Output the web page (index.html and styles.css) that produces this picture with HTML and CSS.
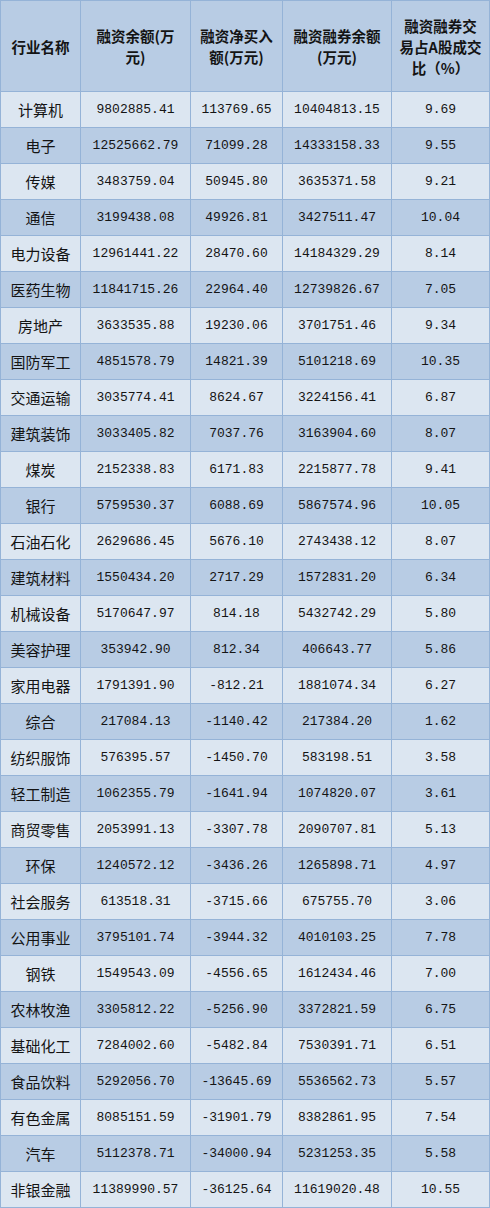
FILE: index.html
```html
<!DOCTYPE html>
<html lang="zh-CN">
<head>
<meta charset="utf-8">
<title>行业融资融券</title>
<link rel="stylesheet" href="styles.css">
</head>
<body>
<div class="table">
  <div class="cell head">行业名称</div>
  <div class="cell head">融资余额(万<br>元)</div>
  <div class="cell head">融资净买入<br>额(万元)</div>
  <div class="cell head">融资融券余额<br>(万元)</div>
  <div class="cell head">融资融券交<br>易占A股成交<br>比（%）</div>

  <div class="cell name">计算机</div><div class="cell num">9802885.41</div><div class="cell num">113769.65</div><div class="cell num">10404813.15</div><div class="cell num">9.69</div>
  <div class="cell name alt">电子</div><div class="cell num alt">12525662.79</div><div class="cell num alt">71099.28</div><div class="cell num alt">14333158.33</div><div class="cell num alt">9.55</div>
  <div class="cell name">传媒</div><div class="cell num">3483759.04</div><div class="cell num">50945.80</div><div class="cell num">3635371.58</div><div class="cell num">9.21</div>
  <div class="cell name alt">通信</div><div class="cell num alt">3199438.08</div><div class="cell num alt">49926.81</div><div class="cell num alt">3427511.47</div><div class="cell num alt">10.04</div>
  <div class="cell name">电力设备</div><div class="cell num">12961441.22</div><div class="cell num">28470.60</div><div class="cell num">14184329.29</div><div class="cell num">8.14</div>
  <div class="cell name alt">医药生物</div><div class="cell num alt">11841715.26</div><div class="cell num alt">22964.40</div><div class="cell num alt">12739826.67</div><div class="cell num alt">7.05</div>
  <div class="cell name">房地产</div><div class="cell num">3633535.88</div><div class="cell num">19230.06</div><div class="cell num">3701751.46</div><div class="cell num">9.34</div>
  <div class="cell name alt">国防军工</div><div class="cell num alt">4851578.79</div><div class="cell num alt">14821.39</div><div class="cell num alt">5101218.69</div><div class="cell num alt">10.35</div>
  <div class="cell name">交通运输</div><div class="cell num">3035774.41</div><div class="cell num">8624.67</div><div class="cell num">3224156.41</div><div class="cell num">6.87</div>
  <div class="cell name alt">建筑装饰</div><div class="cell num alt">3033405.82</div><div class="cell num alt">7037.76</div><div class="cell num alt">3163904.60</div><div class="cell num alt">8.07</div>
  <div class="cell name">煤炭</div><div class="cell num">2152338.83</div><div class="cell num">6171.83</div><div class="cell num">2215877.78</div><div class="cell num">9.41</div>
  <div class="cell name alt">银行</div><div class="cell num alt">5759530.37</div><div class="cell num alt">6088.69</div><div class="cell num alt">5867574.96</div><div class="cell num alt">10.05</div>
  <div class="cell name">石油石化</div><div class="cell num">2629686.45</div><div class="cell num">5676.10</div><div class="cell num">2743438.12</div><div class="cell num">8.07</div>
  <div class="cell name alt">建筑材料</div><div class="cell num alt">1550434.20</div><div class="cell num alt">2717.29</div><div class="cell num alt">1572831.20</div><div class="cell num alt">6.34</div>
  <div class="cell name">机械设备</div><div class="cell num">5170647.97</div><div class="cell num">814.18</div><div class="cell num">5432742.29</div><div class="cell num">5.80</div>
  <div class="cell name alt">美容护理</div><div class="cell num alt">353942.90</div><div class="cell num alt">812.34</div><div class="cell num alt">406643.77</div><div class="cell num alt">5.86</div>
  <div class="cell name">家用电器</div><div class="cell num">1791391.90</div><div class="cell num">-812.21</div><div class="cell num">1881074.34</div><div class="cell num">6.27</div>
  <div class="cell name alt">综合</div><div class="cell num alt">217084.13</div><div class="cell num alt">-1140.42</div><div class="cell num alt">217384.20</div><div class="cell num alt">1.62</div>
  <div class="cell name">纺织服饰</div><div class="cell num">576395.57</div><div class="cell num">-1450.70</div><div class="cell num">583198.51</div><div class="cell num">3.58</div>
  <div class="cell name alt">轻工制造</div><div class="cell num alt">1062355.79</div><div class="cell num alt">-1641.94</div><div class="cell num alt">1074820.07</div><div class="cell num alt">3.61</div>
  <div class="cell name">商贸零售</div><div class="cell num">2053991.13</div><div class="cell num">-3307.78</div><div class="cell num">2090707.81</div><div class="cell num">5.13</div>
  <div class="cell name alt">环保</div><div class="cell num alt">1240572.12</div><div class="cell num alt">-3436.26</div><div class="cell num alt">1265898.71</div><div class="cell num alt">4.97</div>
  <div class="cell name">社会服务</div><div class="cell num">613518.31</div><div class="cell num">-3715.66</div><div class="cell num">675755.70</div><div class="cell num">3.06</div>
  <div class="cell name alt">公用事业</div><div class="cell num alt">3795101.74</div><div class="cell num alt">-3944.32</div><div class="cell num alt">4010103.25</div><div class="cell num alt">7.78</div>
  <div class="cell name">钢铁</div><div class="cell num">1549543.09</div><div class="cell num">-4556.65</div><div class="cell num">1612434.46</div><div class="cell num">7.00</div>
  <div class="cell name alt">农林牧渔</div><div class="cell num alt">3305812.22</div><div class="cell num alt">-5256.90</div><div class="cell num alt">3372821.59</div><div class="cell num alt">6.75</div>
  <div class="cell name">基础化工</div><div class="cell num">7284002.60</div><div class="cell num">-5482.84</div><div class="cell num">7530391.71</div><div class="cell num">6.51</div>
  <div class="cell name alt">食品饮料</div><div class="cell num alt">5292056.70</div><div class="cell num alt">-13645.69</div><div class="cell num alt">5536562.73</div><div class="cell num alt">5.57</div>
  <div class="cell name">有色金属</div><div class="cell num">8085151.59</div><div class="cell num">-31901.79</div><div class="cell num">8382861.95</div><div class="cell num">7.54</div>
  <div class="cell name alt">汽车</div><div class="cell num alt">5112378.71</div><div class="cell num alt">-34000.94</div><div class="cell num alt">5231253.35</div><div class="cell num alt">5.58</div>
  <div class="cell name">非银金融</div><div class="cell num">11389990.57</div><div class="cell num">-36125.64</div><div class="cell num">11619020.48</div><div class="cell num">10.55</div>
</div>
</body>
</html>
```

FILE: styles.css
```css
html, body {
  margin: 0;
  padding: 0;
  background: #ffffff;
}

.table {
  display: grid;
  grid-template-columns: 80px 110px 92px 109px 98px;
  grid-template-rows: 91px;
  grid-auto-rows: 36px;
  width: 490px;
  box-sizing: border-box;
  border-left: 1px solid #95b3d7;
  border-top: 1px solid #95b3d7;
  color: #141414;
}

.cell {
  box-sizing: border-box;
  border-right: 1px solid #95b3d7;
  border-bottom: 1px solid #95b3d7;
  background: #dce6f1;
  display: flex;
  align-items: center;
  justify-content: center;
  text-align: center;
  white-space: nowrap;
}

.cell.alt,
.cell.head {
  background: #b8cce4;
}

.head {
  font-family: "Noto Sans CJK SC", sans-serif;
  font-weight: 700;
  font-size: 14.5px;
  line-height: 21px;
}

.name {
  font-family: "Noto Sans CJK SC", sans-serif;
  font-size: 15px;
  font-weight: 400;
}

.num {
  font-family: "Liberation Mono", monospace;
  font-size: 13px;
}
```
